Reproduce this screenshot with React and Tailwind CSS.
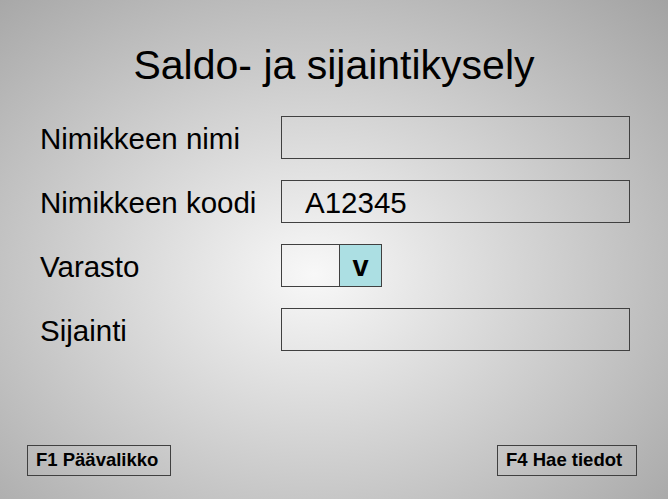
import React from 'react';

const fields = [
  { label: 'Nimikkeen nimi', value: '' },
  { label: 'Nimikkeen koodi', value: 'A12345' },
  { label: 'Varasto', select: true },
  { label: 'Sijainti', value: '' },
];

function Field({ label, value, select }) {
  return (
    <>
      <div className="flex items-center h-[43px] pt-[2px] text-[29.5px] leading-none text-black">{label}</div>
      {select ? (
        <div className="flex h-[43px] w-[101px] border border-[#404040]">
          <div className="w-[57px] h-full" />
          <div className="flex-1 flex items-center justify-center bg-[#acdfe3] border-l border-[#404040] font-bold text-[29px] leading-none pt-[2px]">
            v
          </div>
        </div>
      ) : (
        <div className="flex items-center h-[43px] w-[349px] border border-[#404040] px-[23px] pt-[2px] text-[29.5px] leading-none text-black">
          {value}
        </div>
      )}
    </>
  );
}

export default function App() {
  return (
    <div
      className="w-[668px] h-[499px] flex flex-col bg-[radial-gradient(ellipse_farthest-corner_at_47%_55%,#f8f8f8_0%,#d6d6d6_40%,#a3a3a3_100%)] overflow-hidden"
      style={{ fontFamily: '"Liberation Sans", Arial, sans-serif' }}
    >
      <h1 className="pt-[45px] text-center text-[41px] leading-[40px] text-black">Saldo- ja sijaintikysely</h1>

      <div className="grid grid-cols-[241px_349px] gap-y-[21px] pl-[40px] mt-[31px]">
        {fields.map((f) => (
          <Field key={f.label} {...f} />
        ))}
      </div>

      <div className="mt-auto flex justify-between pl-[27px] pr-[31px] pb-[23px]">
        <div className="flex items-center h-[31px] w-[144px] border border-[#404040] px-[8px] font-bold text-[18.5px] leading-none">
          F1 Päävalikko
        </div>
        <div className="flex items-center h-[31px] w-[140px] border border-[#404040] px-[8px] font-bold text-[18.5px] leading-none">
          F4 Hae tiedot
        </div>
      </div>
    </div>
  );
}
